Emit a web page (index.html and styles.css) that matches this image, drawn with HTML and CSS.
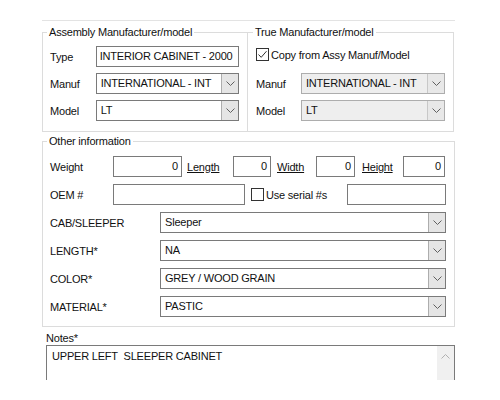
FILE: index.html
```html
<!DOCTYPE html>
<html lang="en">
<head>
    <meta charset="UTF-8">
    <title>Assembly Details</title>
    <link rel="stylesheet" href="styles.css">
</head>
<body>
    <div class="panel">
        <div class="top-groups">
            <fieldset class="group group-assy">
                <legend>Assembly Manufacturer/model</legend>
                <div class="field-row">
                    <span class="field-label">Type</span>
                    <div class="text-box wide">INTERIOR CABINET - 2000</div>
                </div>
                <div class="field-row">
                    <span class="field-label">Manuf</span>
                    <div class="combo wide">
                        <span class="combo-text">INTERNATIONAL - INT</span>
                        <span class="combo-button"><svg width="9" height="5" viewBox="0 0 9 5"><path d="M0.5 0.5 L4.5 4.5 L8.5 0.5" fill="none" stroke="#606060"/></svg></span>
                    </div>
                </div>
                <div class="field-row">
                    <span class="field-label">Model</span>
                    <div class="combo wide">
                        <span class="combo-text">LT</span>
                        <span class="combo-button"><svg width="9" height="5" viewBox="0 0 9 5"><path d="M0.5 0.5 L4.5 4.5 L8.5 0.5" fill="none" stroke="#606060"/></svg></span>
                    </div>
                </div>
            </fieldset>

            <fieldset class="group group-true">
                <legend>True Manufacturer/model</legend>
                <div class="check-row">
                    <span class="check-box checked"><svg width="11" height="11" viewBox="0 0 11 11"><path d="M1.5 5.5 L4.2 8.3 L9.5 2.2" fill="none" stroke="#333" stroke-width="1"/></svg></span>
                    <span>Copy from Assy Manuf/Model</span>
                </div>
                <div class="field-row">
                    <span class="field-label short">Manuf</span>
                    <div class="combo disabled true-combo">
                        <span class="combo-text">INTERNATIONAL - INT</span>
                        <span class="combo-button"><svg width="9" height="5" viewBox="0 0 9 5"><path d="M0.5 0.5 L4.5 4.5 L8.5 0.5" fill="none" stroke="#606060"/></svg></span>
                    </div>
                </div>
                <div class="field-row">
                    <span class="field-label short">Model</span>
                    <div class="combo disabled true-combo">
                        <span class="combo-text">LT</span>
                        <span class="combo-button"><svg width="9" height="5" viewBox="0 0 9 5"><path d="M0.5 0.5 L4.5 4.5 L8.5 0.5" fill="none" stroke="#606060"/></svg></span>
                    </div>
                </div>
            </fieldset>
        </div>

        <fieldset class="group group-other">
            <legend>Other information</legend>
            <div class="other-row">
                <span class="other-label">Weight</span>
                <div class="text-box num w-weight">0</div>
                <span class="link-label l-length">Length</span>
                <div class="text-box num w-length">0</div>
                <span class="link-label l-width">Width</span>
                <div class="text-box num w-width">0</div>
                <span class="link-label l-height">Height</span>
                <div class="text-box num w-height">0</div>
            </div>
            <div class="other-row">
                <span class="other-label">OEM #</span>
                <div class="text-box w-oem"></div>
                <span class="check-box serial-check"></span>
                <span class="serial-label">Use serial #s</span>
                <div class="text-box w-serial"></div>
            </div>
            <div class="other-row">
                <span class="attr-label">CAB/SLEEPER</span>
                <div class="combo attr-combo">
                    <span class="combo-text">Sleeper</span>
                    <span class="combo-button"><svg width="9" height="5" viewBox="0 0 9 5"><path d="M0.5 0.5 L4.5 4.5 L8.5 0.5" fill="none" stroke="#606060"/></svg></span>
                </div>
            </div>
            <div class="other-row">
                <span class="attr-label">LENGTH*</span>
                <div class="combo attr-combo">
                    <span class="combo-text">NA</span>
                    <span class="combo-button"><svg width="9" height="5" viewBox="0 0 9 5"><path d="M0.5 0.5 L4.5 4.5 L8.5 0.5" fill="none" stroke="#606060"/></svg></span>
                </div>
            </div>
            <div class="other-row">
                <span class="attr-label">COLOR*</span>
                <div class="combo attr-combo">
                    <span class="combo-text">GREY / WOOD GRAIN</span>
                    <span class="combo-button"><svg width="9" height="5" viewBox="0 0 9 5"><path d="M0.5 0.5 L4.5 4.5 L8.5 0.5" fill="none" stroke="#606060"/></svg></span>
                </div>
            </div>
            <div class="other-row">
                <span class="attr-label">MATERIAL*</span>
                <div class="combo attr-combo">
                    <span class="combo-text">PASTIC</span>
                    <span class="combo-button"><svg width="9" height="5" viewBox="0 0 9 5"><path d="M0.5 0.5 L4.5 4.5 L8.5 0.5" fill="none" stroke="#606060"/></svg></span>
                </div>
            </div>
        </fieldset>

        <div class="notes">
            <div class="notes-label">Notes*</div>
            <div class="notes-box">
                <div class="notes-text">UPPER LEFT&nbsp; SLEEPER CABINET</div>
                <div class="notes-scroll"><svg width="9" height="5" viewBox="0 0 9 5"><path d="M0.5 4.5 L4.5 0.5 L8.5 4.5" fill="none" stroke="#b0b0b0"/></svg></div>
            </div>
        </div>
    </div>
</body>
</html>
```

FILE: styles.css
```css
body {
    margin: 0;
    background: #ffffff;
    font-family: "Liberation Sans", Arial, sans-serif;
    font-size: 11px;
    letter-spacing: -0.2px;
    color: #111111;
}

.panel {
    margin: 20px 0 0 42px;
    width: 413px;
    border-top: 1px solid #e3e3e3;
    padding-top: 4px;
}

.top-groups {
    display: flex;
}

.group {
    margin: 0;
    border: 1px solid #dcdcdc;
    min-width: 0;
}

.group legend {
    padding: 0 2px;
    margin-left: -3px;
    line-height: 14px;
}

.group-assy {
    width: 206px;
    box-sizing: border-box;
    padding: 7px 8px 10px 7px;
}

.group-true {
    width: 207px;
    box-sizing: border-box;
    margin-left: -1px;
    padding: 7px 7px 10px 8px;
}

.field-row {
    display: flex;
    align-items: center;
    height: 21px;
    margin-bottom: 6px;
}

.field-row:last-child {
    margin-bottom: 0;
}

.field-label {
    width: 46px;
}

.field-label.short {
    width: 45px;
}

.text-box {
    box-sizing: border-box;
    height: 21px;
    border: 1px solid #7a7a7a;
    background: #fff;
    padding: 0 3px;
    line-height: 19px;
    white-space: nowrap;
    overflow: hidden;
}

.text-box.num {
    text-align: right;
}

.wide {
    width: 144px;
}

.combo {
    box-sizing: border-box;
    height: 21px;
    border: 1px solid #7a7a7a;
    background: #fff;
    display: flex;
    align-items: stretch;
}

.combo-text {
    flex: 1;
    padding-left: 4px;
    line-height: 19px;
    white-space: nowrap;
    overflow: hidden;
}

.combo-button {
    width: 16px;
    background: #e5e5e5;
    border-left: 1px solid #adadad;
    display: flex;
    align-items: center;
    justify-content: center;
}

.combo.disabled {
    background: #eeeeee;
    border-color: #adadad;
}

.combo.disabled .combo-button {
    border-left-color: #c8c8c8;
    background: #e8e8e8;
}

.true-combo {
    width: 144px;
}

.check-row {
    display: flex;
    align-items: center;
    height: 17px;
    margin-bottom: 10px;
}

.check-box {
    box-sizing: border-box;
    width: 13px;
    height: 13px;
    border: 1px solid #333;
    background: #fff;
    display: inline-flex;
    align-items: center;
    justify-content: center;
    margin-right: 2px;
}

.group-other {
    margin-top: 2px;
    padding: 8px 7px 9px 7px;
}

.other-row {
    display: flex;
    align-items: center;
    height: 21px;
    margin-bottom: 7px;
}

.other-row:last-child {
    margin-bottom: 0;
}

.other-label {
    width: 63px;
}

.link-label {
    text-decoration: underline;
    box-sizing: border-box;
}

.w-weight { width: 69px; }
.l-length { width: 51px; padding-left: 5px; }
.w-length { width: 38px; }
.l-width { width: 45px; padding-left: 6px; }
.w-width { width: 39px; }
.l-height { width: 48px; padding-left: 7px; }
.w-height { width: 42px; }

.w-oem { width: 132px; }

.serial-check {
    margin-left: 6px;
}

.serial-label {
    width: 81px;
}

.w-serial {
    width: 99px;
}

.attr-label {
    width: 110px;
}

.attr-combo {
    width: 286px;
}

.notes {
    margin: 5px 0 0 4px;
}

.notes-label {
    line-height: 13px;
}

.notes-box {
    box-sizing: border-box;
    width: 409px;
    height: 35px;
    border: 1px solid #7a7a7a;
    border-bottom: none;
    display: flex;
}

.notes-text {
    flex: 1;
    padding: 4px 0 0 5px;
    line-height: 13px;
}

.notes-scroll {
    width: 17px;
    background: #f0f0f0;
    display: flex;
    justify-content: center;
    padding-top: 8px;
    box-sizing: border-box;
}
```
